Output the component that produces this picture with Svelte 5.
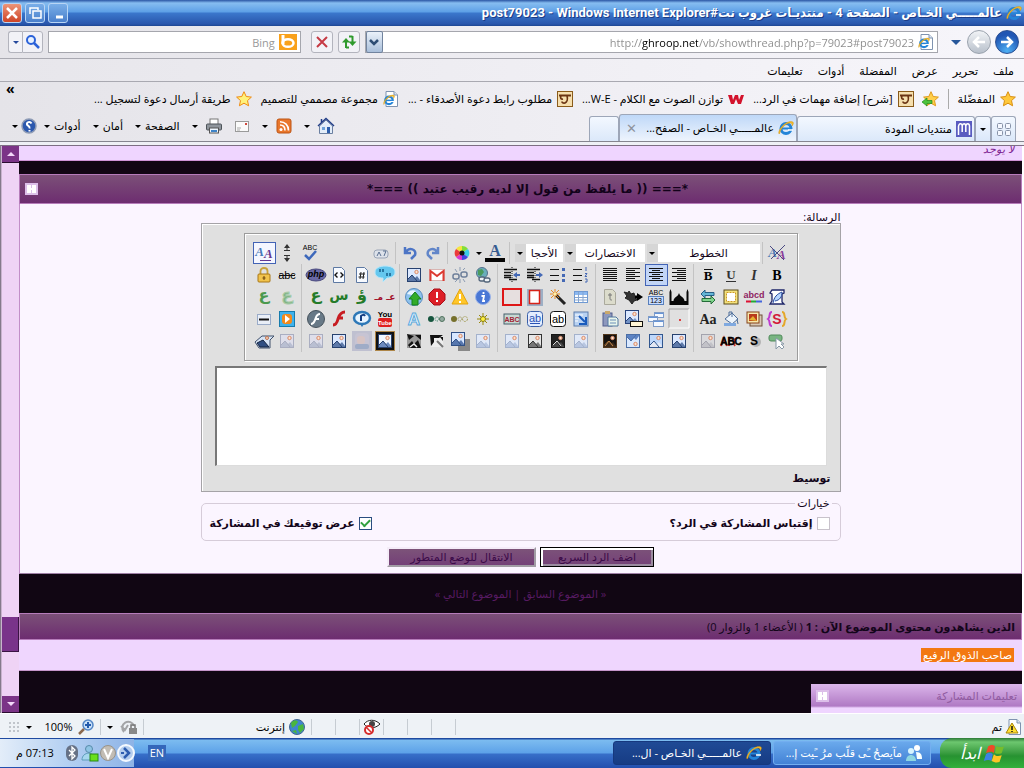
<script>
	let quote = $state(false);
	let signature = $state(true);
	let message = $state('');
	let url = $state('http://ghroop.net/vb/showthread.php?p=79023#post79023');
	let search = $state('');

	// small landscape thumbnail, most of the image effect buttons are variants of it
	function pic(sky, hill, edge, extra = '') {
		return `<rect x="1.5" y="1.5" width="13" height="13" fill="${sky}" stroke="${edge}"/><path d="M2 12l4-4 3 3 2-2 3 4v1H2z" fill="${hill}"/><path d="M2 12l4-4 5 6" fill="none" stroke="${edge}"/><circle cx="10.5" cy="5" r="1.7" fill="#fde3cc" stroke="#d98a6a"/>${extra}`;
	}

	// seven text lines, every second one short
	function lines(x, short) {
		return [2, 4, 6, 8, 10, 12, 14]
			.map((y, i) => `<path d="M${i % 2 ? x : 1} ${y - 0.5}h${i % 2 ? short : 14}" stroke="#111"/>`)
			.join('');
	}

	// centred icon lettering
	function letters(text, y, size, attrs = '') {
		return `<text x="8" y="${y}" text-anchor="middle" font-family="Liberation Sans, sans-serif" font-size="${size}" ${attrs}>${text}</text>`;
	}

	function serif(text, y, size, attrs = '') {
		return `<text x="8" y="${y}" text-anchor="middle" font-family="Liberation Serif, serif" font-weight="bold" font-size="${size}" ${attrs}>${text}</text>`;
	}

	function arabic(text, y, size, fill, attrs = '') {
		return `<text x="8" y="${y}" text-anchor="middle" font-family="DejaVu Sans, sans-serif" font-weight="bold" font-size="${size}" fill="${fill}" ${attrs}>${text}</text>`;
	}

	function star(fill, edge) {
		return `<path d="M8 .7l2.2 4.8 5.2.6-3.9 3.5 1.1 5.2L8 12.2l-4.6 2.6 1.1-5.2L.6 6.1l5.2-.6z" fill="${fill}" stroke="${edge}"/>`;
	}

	const ie =
		'<circle cx="8" cy="8.5" r="5" fill="none" stroke="#2384d8" stroke-width="3"/><path d="M4 8.5h9" stroke="#2384d8" stroke-width="2"/><path d="M10 10h5" stroke="#fff" stroke-width="1.5"/><path d="M1 14C-1 10 9-1 15 2c1 1 0 3-1 4 0-2 0-3-2-3C8 3 2 9 2 13z" fill="#f6bd2a" stroke="#c98a10" stroke-width=".4"/>';
	const page = '<path d="M3 .5h8l3.5 3.5v11.5H3z" fill="#fff" stroke="#7f93b0"/><path d="M11 .5V4h3.5" fill="#dbe5f3" stroke="#7f93b0"/>';
	const paper = '<path d="M2.5.5h8l3 3v12h-11z" fill="#f7faff" stroke="#5d79a3"/>';

	const icons = {
		ie,
		iePage: page + `<g transform="translate(0 3) scale(.75)">${ie}</g>`,
		star: star('#ffc83c', '#d98f12'),
		starHollow: star('#fff27a', '#f08b12'),
		starAdd: star('#ffcf4a', '#e09a1a') + '<path d="M-1 11l5-4v2.5h5v3H4V15z" fill="#4cc23c" stroke="#1e8a1c" stroke-width=".7"/>',
		fav: '<rect x=".5" y=".5" width="15" height="15" fill="#f6dfae" stroke="#8a5b1a"/><path d="M2 4.500h12" stroke="#6b3413" stroke-width="2"/><path d="M10 5c1 3 0 6-2 7-2 .5-3-.5-3-1.500M4 5c-1 2 0 3.500 2 3" fill="none" stroke="#6b3413" stroke-width="1.700"/>',
		w: '<path d="M0 4h4l1 5 2-5h3l1 5 2-5h3l-3 9h-3L8 8l-2 5H3z" fill="#d3122c"/>',
		m: '<rect width="16" height="16" fill="#5a5cc0"/><path d="M2.500 14V5.500C3 2 6 2 6.200 5v6M6.200 5c.5-3 3.300-3 3.600 0v6M9.800 5c.5-3 3.500-3 3.700 0v9" fill="none" stroke="#fff" stroke-width="1.500"/>',
		bing: '<rect width="18" height="16" fill="#f9a11b"/><path d="M4 1v9" stroke="#fff" stroke-width="3"/><ellipse cx="9" cy="9" rx="5.5" ry="3.8" fill="none" stroke="#fff" stroke-width="2.5"/>',
		search: '<circle cx="6" cy="6" r="4" fill="#e8f2ff" stroke="#2b62d9" stroke-width="2"/><path d="M9 9l5 5" stroke="#2b62d9" stroke-width="2.5"/>',
		stop: '<path d="M3 3l10 10M13 3L3 13" stroke="#c63a45" stroke-width="2"/>',
		refresh: '<path d="M5 14V7.500M8 13.500H5" stroke="#2f9a2d" stroke-width="2"/><path d="M1 8.500L5 4l4 4.500z" fill="#2f9a2d"/><path d="M11.500 2v6M8 2.500h3.500" stroke="#2f9a2d" stroke-width="2"/><path d="M7.500 7.500l4 4.500 4-4.500z" fill="#2f9a2d"/>',
		chevron: '<path d="M4 6l4 4 4-4" fill="none" stroke="#2e4d73" stroke-width="2.5"/>',
		quad: '<g fill="#f5f8ff" stroke="#8792a8"><rect x="1.5" y="2.5" width="5" height="5" rx="1"/><rect x="9.5" y="2.5" width="5" height="5" rx="1"/><rect x="1.5" y="9.5" width="5" height="5" rx="1"/><rect x="9.5" y="9.5" width="5" height="5" rx="1"/></g>',
		home: '<path d="M1.500 8L8 2l6.500 6v7.500h-13z" fill="#e3edf9" stroke="#6b7fa0"/><path d="M0 8l8-7.500L16 8M3.500 5V1" fill="none" stroke="#223e87" stroke-width="1.5"/><rect x="9" y="9" width="3" height="6" fill="#2c5dab"/><rect x="4" y="9" width="3" height="3" fill="#6fa2d9"/>',
		rss: '<rect x="1" y="1" width="14" height="14" rx="2" fill="#e9772c" stroke="#bd5514"/><circle cx="5" cy="11.5" r="1.5" fill="#fff"/><path d="M4 7c3 0 5 2 5 5.500M4 3.700c5 0 8.500 3.500 8.500 8.800" fill="none" stroke="#fff" stroke-width="1.6"/>',
		mail: '<rect x="1.5" y="3.5" width="13" height="10" fill="#fafafa" stroke="#9a9a9a"/><path d="M3 10h4M3 12h3" stroke="#aaa"/><rect x="11" y="5" width="2" height="2" fill="#d0463c"/>',
		print: '<rect x="4" y="1" width="8" height="6" fill="#fff" stroke="#777"/><rect x=".5" y="6" width="15" height="6" rx="1" fill="#8f959c" stroke="#4d5359"/><rect x="3.5" y="10" width="9" height="5" fill="#eef6ff" stroke="#555"/><path d="M5 13h6" stroke="#3e83c8" stroke-width="2"/>',
		help: '<circle cx="8" cy="8" r="7" fill="#2c58ae" stroke="#8e9bb5" stroke-width="1.5"/><path d="M10.500 5.500C9 3 5.500 4 6 6.500c1 2 3 1 2.500 4M8.500 12v1.500" fill="none" stroke="#fff" stroke-width="2"/>',
		bold: serif('B', 13, 14),
		italic: serif('I', 13, 14, 'font-style="italic" fill="#333"'),
		underline: serif('U', 12, 13, 'fill="#333"') + '<path d="M3 14.5h10" stroke="#333"/>',
		overline: serif('B', 13, 13) + '<path d="M4 2.5h9" stroke="#111"/>',
		alignRight: lines(6, 9),
		alignCenter: lines(4, 8),
		alignLeft: lines(1, 9),
		justify: lines(1, 14),
		ol: '<path d="M0 2.5h9M0 8.5h9M0 13.5h9" stroke="#111"/><path d="M13 0v4M12 6.5h2l-2 3h2M12 12h2v3h-2" fill="none" stroke="#4569b5"/>',
		ul: '<path d="M0 2.5h9M0 8.5h9M0 13.5h9" stroke="#111"/><g fill="#4569b5"><rect x="12" y="1" width="3" height="3"/><rect x="12" y="7" width="3" height="3"/><rect x="12" y="12" width="3" height="3"/></g>',
		indent: '<path d="M0 2.5h13M0 5.5h7M0 8.5h7M0 10.5h7M5 12.5h8" stroke="#111" stroke-width="1.5"/><path d="M8 0v16" stroke="#111" stroke-dasharray="1 1"/><path d="M9 8h3" stroke="#4569b5" stroke-width="2"/><path d="M12 5l4 3-4 3z" fill="#4569b5"/>',
		outdent: '<path d="M0 2.5h13M0 5.5h7M0 8.5h7M0 10.5h7M5 12.5h8" stroke="#111" stroke-width="1.5"/><path d="M8 0v16" stroke="#111" stroke-dasharray="1 1"/><path d="M13 8h3" stroke="#4569b5" stroke-width="2"/><path d="M13 5L9 8l4 3z" fill="#4569b5"/>',
		link: '<circle cx="7" cy="6" r="5.5" fill="#69aebb" stroke="#55708c"/><path d="M3 3l4-1 2 3-3 4-3-1z" fill="#4a9a5c"/><g fill="#eef2f5" stroke="#52647a" stroke-width="1.3"><rect x="4" y="10" width="6" height="4" rx="2"/><rect x="9" y="11" width="6" height="4" rx="2"/></g>',
		unlink: '<g fill="none" stroke="#6c7e99" stroke-width="1.5"><rect x="1" y="7" width="6" height="5" rx="2"/><rect x="9" y="5" width="6" height="5" rx="2"/></g><path d="M8 0v4M3 2l2 3M13 1l-2 2M8 12v4M3 15l2-2M13 15l-2-3" stroke="#8b9bb2"/>',
		gmail: '<rect x=".5" y="2.5" width="15" height="11" fill="#fff" stroke="#d9b5b2"/><path d="M1.500 14V4L8 9l6.500-5v10" fill="none" stroke="#dc3b32" stroke-width="2"/>',
		image: pic('#dce9ff', '#5d79a9', '#27416f'),
		quote: '<path d="M8-1c6 0 10 2 10 6s-4 6-8 6l-4 4v-4C1 11-2 9-2 5s5-6 10-6z" fill="#65c7ee" stroke="#bbe8fa"/><path d="M3 2v3M6 2v3M10 6v3M13 6v3" stroke="#155d8a" stroke-width="1.5"/>',
		code: paper + '<path d="M7 5L6 12M10 5l-1 7M5 7h6M4.500 10h6" stroke="#222"/>',
		html: paper + '<path d="M6.500 5.500L4 8l2.500 2.500M9.500 5.500L12 8l-2.500 2.500" fill="none" stroke="#111" stroke-width="1.4"/>',
		php: '<ellipse cx="8" cy="8" rx="10" ry="6" fill="#6a69a6" stroke="#46467c"/>' + letters('php', 10, 9, 'font-style="italic" font-weight="bold"'),
		strike: letters('abc', 12, 11) + '<path d="M0 8.5h16" stroke="#111"/>',
		lock: '<path d="M4.500 8V4c0-4 7-4 7 0v4" fill="none" stroke="#c8a23c" stroke-width="1.8"/><rect x="2" y="7" width="12" height="8" rx="1" fill="#f1c34c" stroke="#a87716"/><path d="M8 9v4M6.500 11h3" stroke="#6b430b"/>',
		scroll: '<path d="M3 1h12v3l-2 1v8l2 2H1l2-3V5L1 4z" fill="#fff" stroke="#1e2668" stroke-width="1.3"/><path d="M4 14C5 8 8 5 13 3c0 5-2 8-7 9" fill="#b7d6ff" stroke="#25479a"/>',
		abcd: letters('abcd', 9, 9, 'font-weight="bold" fill="#8e1d62"') + '<path d="M0 12.5h5" stroke="#d13" stroke-width="2"/><path d="M5 12.5h5" stroke="#2a3" stroke-width="2"/><path d="M10 12.5h6" stroke="#46d" stroke-width="2"/>',
		frame: '<rect x="1" y="1" width="14" height="14" fill="#f4e27b" stroke="#5b4b1b"/><rect x="3.5" y="3.5" width="9" height="9" fill="#fff" stroke="#c92" stroke-dasharray="2 1"/>',
		swap: '<path d="M1 5l4-4v2.500h9v3H5V9z" fill="#64b7d6" stroke="#275e86"/><path d="M15 11l-4-4v2.500H2v3h9V15z" fill="#81d58d" stroke="#246c39"/>',
		mosque: '<path d="M-1.500 16V3l1-3 1 3v9h2C2.500 8 7 8 8 4c1 4 5.500 4 5.500 8h2V3l1-3 1 3v13z" fill="#080808"/>',
		abc123: letters('ABC', 6, 7) + '<rect x=".5" y="7.5" width="15" height="8" fill="#c7dcff" stroke="#587fbb"/>' + letters('123', 14, 7),
		ink: '<path d="M-1 3l4 1 1-2 2 3 3-1 1 4 2 3-3 1-2 3-3-4-4-2 2-2z" fill="#333" stroke="#222"/><path d="M10 8h3" stroke="#000" stroke-width="3"/><path d="M12 4v8l6-4z" fill="#000"/>',
		note: '<path d="M2.500.5h8l3 3v12h-11z" fill="#dcdccc" stroke="#aaa99c"/><path d="M8 4v6c0 1 1 1 2 1M6 6h4" fill="none" stroke="#777"/>',
		table: '<rect x="1.5" y="2.5" width="13" height="11" fill="#fff" stroke="#6f99d2"/><rect x="2" y="3" width="12" height="3" fill="#8bb8f1"/><path d="M2 8.5h12M2 11h12M5.500 3v10M10 3v10" stroke="#85a5d0"/>',
		wand: '<path d="M6 6l9 9" stroke="#222" stroke-width="3"/><path d="M5 0v10M0 5h10M1 1l8 8M9 1L1 9" stroke="#e98a23"/><circle cx="5" cy="5" r="1.5" fill="#fff1a3"/>',
		paperRed: '<rect x="0" y="0" width="16" height="17" fill="#9dafc5"/><rect x="2.5" y="1.5" width="10" height="13" fill="#fff" stroke="#d82317" stroke-width="1.5"/>',
		redFrame: '<rect x="-1" y="0" width="18" height="16" fill="#e6dfdf" stroke="#de1717" stroke-width="2"/>',
		info: '<circle cx="8" cy="8" r="7.5" fill="#4977d5" stroke="#9ab3e9"/><path d="M8.500 3v2M6.500 7h2.500l-1 5h2" fill="none" stroke="#fff" stroke-width="1.8"/>',
		warn: '<path d="M8 0l8 15H0z" fill="#ffc629" stroke="#e3a30c"/><path d="M8 5v5M8 12v2" stroke="#fff" stroke-width="2"/>',
		halt: '<path d="M5 0h6l5 5v6l-5 5H5l-5-5V5z" fill="#dd1f27" stroke="#a70f19"/><path d="M8 3v6M8 11v2" stroke="#fff" stroke-width="2"/>',
		upload: '<circle cx="8" cy="8" r="8.5" fill="#8dc1ed" stroke="#5a8cc0"/><path d="M1 5c3-5 7-4 9-3L6 6z" fill="#e8f6ff"/><path d="M9 3l6 7h-3v6H6v-6H3z" fill="#32ac29" stroke="#14801c"/>',
		amRed: arabic('عـ مـ', 11, 9, '#a3122e'),
		waw: arabic('ؤ', 11, 16, '#247b29'),
		seen: arabic('س', 11, 14, '#247b29'),
		ain: arabic('ع', 11, 16, '#247b29'),
		ainGlow: arabic('ع', 11, 16, '#81b486', 'stroke="#a9cbaa"'),
		ainSoft: arabic('ع', 11, 16, '#4a994e'),
		smile: letters('S', 13, 14, 'font-weight="bold" fill="#d21b39"') + '<path d="M3 1C-1 1 2 6-1 8c3 2 0 7 4 7" fill="none" stroke="#bf3bd0" stroke-width="2"/><path d="M13 1c4 0 1 5 4 7-3 2 0 7-4 7" fill="none" stroke="#e4a72b" stroke-width="2"/>',
		photos: '<rect x="4" y="4" width="12" height="11" fill="#d8c8b5" stroke="#6f5039"/><rect x="1" y="1" width="12" height="11" fill="#f6e8ac" stroke="#86421a"/><rect x="3" y="3" width="8" height="7" fill="#b93a1c"/><path d="M3 9l4-4 4 5z" fill="#e4b32f"/>',
		bucket: '<path d="M2 8l7-6 6 6-6 5z" fill="#edf4fb" stroke="#4f6f9b"/><path d="M6 5V1h3v5M14 8l1 5" fill="none" stroke="#4f6f9b"/><path d="M1 12h12v3H1z" fill="#7fa9e0"/>',
		aa: serif('Aa', 13, 14, 'fill="#222"'),
		dot: '<path d="M-2 17V-2h20" fill="none" stroke="#a2a0a2"/><path d="M-2 17h20V-2" fill="none" stroke="#fff"/><rect x="8" y="8" width="2" height="2" fill="#dc4242"/>',
		windows: '<g fill="#f5f9ff" stroke="#7d9bc8"><rect x="6.5" y="1.5" width="9" height="5"/><rect x=".5" y="5.5" width="9" height="5"/><rect x="5.5" y="9.5" width="10" height="6"/></g><path d="M7 2.5h8M1 6.5h8M6 10.5h9" stroke="#6594d7"/>',
		caption: `<g transform="translate(-1 -2)">${pic('#dce9ff', '#7292c5', '#29447b')}</g><rect x="5.5" y="10.5" width="12" height="5" fill="#fff6d7" stroke="#111"/>`,
		paste: '<rect x="1" y="2" width="9" height="13" fill="#8d98bd" stroke="#535f8d"/><rect x="3" y="0" width="5" height="3" fill="#c9a86c"/><path d="M6 6h8l2 2v7H6z" fill="#e8f5ec" stroke="#5378a0"/><path d="M8 9h6M8 12h6" stroke="#6b8eb8"/>',
		imgDown: '<rect x="1" y="1" width="14" height="14" fill="#b9d2f2" stroke="#5d7dab"/><path d="M2 4h8M2 7h4M2 10h3" stroke="#fff"/><path d="M6 5l6 6M13 6v7H6" fill="none" stroke="#195bbd" stroke-width="2"/>',
		abBlack: '<rect x=".5" y=".5" width="15" height="15" rx="3" fill="#fff" stroke="#111"/>' + letters('ab', 12, 11),
		abBlue: '<rect x=".5" y=".5" width="15" height="15" rx="3" fill="#e3edff" stroke="#3a5fa8"/>' + letters('ab', 11, 11, 'fill="#2b53b5"') + '<path d="M3 12.5h10" stroke="#2b53b5"/>',
		abcRed: '<rect x="0" y="3" width="16" height="10" fill="#c7d7d2" stroke="#46606d"/>' + letters('ABC', 11, 7, 'font-weight="bold" fill="#a21f35"'),
		sun: '<path d="M8 2v12M2 8h12M4 4l8 8M12 4l-8 8" stroke="#998908"/><circle cx="8" cy="8" r="2.5" fill="#fff13b" stroke="#887c14"/>',
		dotsGold: '<circle cx="2" cy="8" r="3" fill="#76702c"/><circle cx="8" cy="8" r="2" fill="none" stroke="#8b843b" stroke-dasharray="1 1"/><circle cx="13" cy="8" r="2.5" fill="none" stroke="#a7a05b" stroke-dasharray="2 1"/>',
		dotsGreen: '<circle cx="2" cy="8" r="3" fill="#16553e"/><circle cx="8" cy="8" r="2" fill="none" stroke="#257b5a" stroke-dasharray="1 1"/><circle cx="13" cy="8" r="2.5" fill="#93aaa0" stroke="#51745f"/>',
		outlineA: letters('A', 14, 17, 'font-weight="bold" fill="#eef8ff" stroke="#5ba9dc"'),
		youtube: letters('You', 6, 8, 'font-weight="bold"') + '<rect x="1" y="7" width="14" height="9" rx="2" fill="#df2020"/>' + letters('Tube', 14, 6, 'font-weight="bold" fill="#fff"'),
		real: '<ellipse cx="8" cy="7" rx="8" ry="6" fill="#e7f4ff" stroke="#2d78b7" stroke-width="2.5"/><path d="M6 13l2 3 2-3" fill="#2d78b7"/><path d="M7 10V5c1-1 3-2 4 0" fill="none" stroke="#123c80" stroke-width="2"/>',
		flashRed: '<path d="M14 1C9 1 8 5 7 8c-1 4-2 6-5 6M7 7h5" fill="none" stroke="#c71c22" stroke-width="3"/>',
		flash: '<circle cx="8" cy="8" r="8.5" fill="#687987" stroke="#46525c"/><path d="M12 3C8 3 8 7 7 9s-1 4-4 4M7 8h4" fill="none" stroke="#fff" stroke-width="2"/>',
		play: '<rect x=".5" y=".5" width="15" height="15" fill="#3db2ee" stroke="#167bac"/><rect x="3" y="3" width="10" height="10" rx="3" fill="#f38a1c"/><path d="M6 4l5 4-5 4z" fill="#fff"/>',
		hr: '<rect x="1.5" y="3.5" width="13" height="10" fill="#e9eef7" stroke="#9aabc8"/><path d="M3 8.5h10" stroke="#111" stroke-width="2"/>',
		pick: '<rect x="0" y="2" width="13" height="6" rx="2" fill="#79b582" stroke="#508b5b"/><path d="M7 5v11l3-3 3 3 2-2-3-3h3z" fill="#fff" stroke="#8798a7"/>',
		shadowS: '<circle cx="10" cy="9" r="5" fill="#b4b4b4"/>' + letters('S', 12, 12, 'font-weight="bold"'),
		abcShadow: '<path d="M-2 13l3-8 3 8M6 13V5h3M12 13c-2-3-1-7 2-8" fill="none" stroke="#d2352e" stroke-width="2"/>' + letters('ABC', 12, 10, 'font-weight="bold" stroke="#000" stroke-width=".4"'),
		picGrey: pic('#d9d9dc', '#c2c2c8', '#a3a3ad'),
		picA: pic('#bfd8fb', '#e3e8f3', '#32578f'),
		picFlip: `<g transform="matrix(1 0 0 -1 0 16)">${pic('#dae9ff', '#5c83c4', '#4c6fa6')}</g>`,
		picDark: pic('#15120f', '#3b2918', '#51361b', '<path d="M3 13l4-5 4 5" fill="none" stroke="#c98b4e"/>'),
		picLight: pic('#e1e9f8', '#b8c6e1', '#a4b2cc'),
		picBlack: pic('#222', '#444', '#151515', '<path d="M3 12l4-4 4 5" fill="none" stroke="#ddd"/>'),
		picBw: pic('#e7e7e7', '#777', '#333'),
		picShadow: `<rect x="6" y="6" width="12" height="12" fill="#888"/><g transform="translate(-2 -2)">${pic('#d7e7ff', '#5777ae', '#315186')}</g>`,
		picSketch: '<path d="M2 2h12v12H2z" fill="#eee"/><path d="M1 2h13l-4 3H5v4l-3 4zM6 9l4 5M11 4h3v4z" fill="#111"/><path d="M8 8l6 6" stroke="#777" stroke-width="2"/>',
		picSketch2: '<path d="M1 1h14v14H1z" fill="#999"/><path d="M1 1l7 2-5 4zM9 2h6v5zM2 12l4-4 2 3 4-4 3 8H4z" fill="#111"/><path d="M4 14l4-3 3 3" stroke="#eee" fill="none" stroke-width="1.5"/>',
		picGold: `<rect x="-2" y="-2" width="20" height="20" fill="#ae8648"/><rect x="-1" y="-1" width="18" height="18" fill="#111"/>${pic('#f0f6ff', '#6c8bc0', '#27416f')}`,
		picBlur: '<rect x="-2" y="-2" width="20" height="20" fill="#bfc0d0"/><rect x="1" y="0" width="14" height="14" rx="4" fill="#c7c4d3"/><rect x="3" y="3" width="8" height="8" rx="3" fill="#d7c4c4"/><rect x="1" y="11" width="14" height="5" rx="2" fill="#9facc7"/>',
		picFade: pic('#dedeea', '#b9bfd2', '#aaaec1'),
		pic3d: '<path d="M-1 9L6 3h12l-4 4v8H3z" fill="#d7e4f5" stroke="#40506b"/><path d="M1 10l6-3 6 7H4z" fill="#314f82" stroke="#152441"/><circle cx="11" cy="5" r="1.5" fill="#fbd5b8" stroke="#bf7452"/>',
		noFormat: serif('<tspan fill="#4d7ab4">A</tspan><tspan dy="2" fill="#8a3d9a">A</tspan>', 12, 13, 'font-style="italic"') + '<path d="M1 1l14 14M16 0L2 14" stroke="#4b4b83"/>',
		format: serif('<tspan fill="#4677b7">A</tspan><tspan dy="2" fill="#643891">A</tspan>', 11, 13, 'font-style="italic"') + '<path d="M4 15.5h11" stroke="#643891"/>',
		fontColor: serif('A', 11, 16, 'fill="#365b91"') + '<rect x="-2" y="13" width="20" height="4" fill="#050505"/>',
		wheel: '<g opacity=".9"><path d="M8 8L2 4a7 7 0 0 1 6-3z" fill="#f8e52e"/><path d="M8 8V1a7 7 0 0 1 6 3z" fill="#79df29"/><path d="M8 8l6-4a7 7 0 0 1 0 8z" fill="#28cbe8"/><path d="M8 8l6 4a7 7 0 0 1-6 3z" fill="#3136e4"/><path d="M8 8v7a7 7 0 0 1-6-3z" fill="#da29cf"/><path d="M8 8l-6 4a7 7 0 0 1 0-8z" fill="#ed2929"/></g><circle cx="8" cy="8" r="2.5" fill="#111"/>',
		undo: '<path d="M3 2v6h6M4 7c3-5 11-3 9 3l-4 4" fill="none" stroke="#4d75c5" stroke-width="2.5"/>',
		redo: '<path d="M13 2v6H7M12 7C9 2 1 4 3 10l4 4" fill="none" stroke="#6286c9" stroke-width="2.5"/>',
		swapText: '<rect x="1" y="5" width="14" height="8" rx="3" fill="#dde2ea" stroke="#9aa5b7"/><path d="M4 11l2-4 2 4M10 6h3l-2 5" fill="none" stroke="#586e8f"/>',
		spell: letters('ABC', 5, 7) + '<path d="M3 10l4 4 7-8" fill="none" stroke="#3d68bb" stroke-width="2.5"/>',
		resize: '<path d="M8 0v5M8 11v5" stroke="#333"/><path d="M5 3l3-4 3 4zM5 13l3 4 3-4z" fill="#333"/><path d="M5 5.5h6M5 10.5h6" stroke="#333"/>',
		collapse: '<rect x="1" y="2" width="13" height="12" fill="#dcbfe9"/><path d="M3 4h4v3h1V4h4v8H8V9H7v3H3z" fill="#fff"/>',
		alert: page + '<path d="M6 4l6 10H0z" fill="#ffde31" stroke="#aa8709"/><path d="M6 7v4M6 12v1" stroke="#111" stroke-width="1.5"/>',
		globe: '<circle cx="8" cy="8" r="7.5" fill="#3f85ce" stroke="#416793"/><path d="M2 4c3-4 6-3 7-1L6 7 3 9zM9 7l5-2 1 5-4 4-2-3zM3 12l4-1 1 4z" fill="#49b63f"/>',
		eye: '<path d="M0 5c4-5 11-5 16 0-5 5-12 5-16 0z" fill="#fff" stroke="#222"/><circle cx="8" cy="5" r="3" fill="#444"/><circle cx="5" cy="11" r="4" fill="#fff" stroke="#d52c2c" stroke-width="2"/><path d="M2 8l6 6" stroke="#d52c2c" stroke-width="1.5"/>',
		zoomIn: '<circle cx="10" cy="6" r="5" fill="#c9e0f8" stroke="#5487c6" stroke-width="1.5"/><path d="M10 3v6M7 6h6" stroke="#235bad" stroke-width="2"/><path d="M6 10l-5 5" stroke="#8a684e" stroke-width="2.5"/>',
		protect: '<path d="M13 7A6 6 0 1 0 3 13M0 7l4 4 3-5" fill="none" stroke="#a4a5a7" stroke-width="2"/><rect x="8" y="9" width="8" height="6" fill="#888"/><path d="M10 9V6h4v3" fill="none" stroke="#777" stroke-width="1.5"/>',
		flag: '<path d="M2 2c3-2 5-1 6 0L7 8C5 6 3 7 0 8z" fill="#ef4a27"/><path d="M9 2c3 1 5 1 7 0l-2 6c-2 1-4 1-6 0z" fill="#77bd2b"/><path d="M0 9c3-2 5-1 6 0l-1 6c-2-1-4-1-7 0z" fill="#3c83e4"/><path d="M7 9c2 2 4 2 7 1l-2 6c-3 1-5 0-7-1z" fill="#fec525"/>',
		people: '<circle cx="5" cy="6" r="3" fill="#d7f4ff"/><circle cx="11" cy="3" r="3" fill="#fff"/><path d="M0 16c0-8 10-8 10 0z" fill="#8ed6e1"/><path d="M10 7c5 0 6 3 6 7h-5" fill="#f7ffff"/>',
		bluetooth: '<rect x="2" y="0" width="12" height="16" rx="6" fill="#667185"/><path d="M5 5l6 6-3 3V2l3 3-6 6" fill="none" stroke="#fff" stroke-width="1.3"/>',
		buddy: '<circle cx="7" cy="4" r="3.5" fill="#8fc4e4" stroke="#578aa9"/><path d="M0 15c0-9 13-9 13 0z" fill="#a6d7ee" stroke="#5f9dba"/><rect x="8" y="9" width="8" height="7" fill="#69df1d" stroke="#298819"/>',
		shield: '<circle cx="8" cy="8" r="7.5" fill="#c2bdb5" stroke="#989289"/><path d="M4 4l4 9 4-9" fill="none" stroke="#fff" stroke-width="2"/>',
		expand: '<circle cx="8" cy="8" r="8" fill="#b4cdee" stroke="#f4f9ff" stroke-width="2"/><path d="M3 8h3" stroke="#2d5db0" stroke-width="2"/><path d="M6 3l5 5-5 5" fill="none" stroke="#2d5db0" stroke-width="2.5"/>'
	};

	const menus = ['ملف', 'تحرير', 'عرض', 'المفضلة', 'أدوات', 'تعليمات'];

	const favorites = [
		{ icon: 'fav', text: '[شرح] إضافة مهمات في الرد...' },
		{ icon: 'w', text: 'توازن الصوت مع الكلام - W-E...' },
		{ icon: 'fav', text: 'مطلوب رابط دعوة الأصدقاء - ...' },
		{ icon: 'iePage', text: 'مجموعة مصممي للتصميم' },
		{ icon: 'starHollow', text: 'طريقة أرسال دعوة لتسجيل ...' }
	];

	const commands = [
		{ icon: 'home', label: 'الصفحة الرئيسية', arrow: true },
		{ icon: 'rss', label: 'موجزات', arrow: true },
		{ icon: 'mail', label: 'البريد' },
		{ icon: 'print', label: 'طباعة', arrow: true },
		{ text: 'الصفحة', arrow: true },
		{ text: 'أمان', arrow: true },
		{ text: 'أدوات', arrow: true },
		{ icon: 'help', label: 'تعليمات', arrow: true }
	];

	const selects = [
		{ label: 'الخطوط', size: 'wide' },
		{ label: 'الاختصارات', size: 'medium' },
		{ label: 'الأحجا', size: 'small' }
	];

	// one entry per toolbar row, groups are split by a divider
	const tools = [
		[['bold', 'italic', 'underline', 'overline'], ['alignRight', 'alignCenter', 'alignLeft', 'justify'], ['ol', 'ul', 'indent', 'outdent'], ['link', 'unlink', 'gmail', 'image'], ['quote', 'code', 'html', 'php'], ['strike', 'lock']],
		[['scroll', 'abcd', 'frame', 'swap'], ['mosque', 'abc123', 'ink', 'note'], ['table', 'wand', 'paperRed', 'redFrame'], ['info', 'warn', 'halt', 'upload'], ['amRed', 'waw', 'seen', 'ain'], ['ainGlow', 'ainSoft']],
		[['smile', 'photos', 'bucket', 'aa'], ['dot', 'windows', 'caption', 'paste'], ['imgDown', 'abBlack', 'abBlue', 'abcRed'], ['sun', 'dotsGold', 'dotsGreen', 'outlineA'], ['youtube', 'real', 'flashRed', 'flash'], ['play', 'hr']],
		[['pick', 'shadowS', 'abcShadow', 'picGrey'], ['image', 'picA', 'picFlip', 'picDark'], ['picLight', 'picBlack', 'picBw', 'picLight'], ['picLight', 'picShadow', 'picSketch', 'picSketch2'], ['picGold', 'picBlur', 'image', 'picFade'], ['picFade', 'pic3d']]
	];
</script>

{#snippet icon(name)}
	<svg class="icon" viewBox="0 0 16 16" aria-hidden="true">{@html icons[name]}</svg>
{/snippet}

{#snippet tool(name)}
	<button type="button" class="tool" class:active={name === 'alignCenter' || name === 'format'} aria-label={name}>
		{@render icon(name)}
	</button>
{/snippet}

<div class="window" dir="rtl">
	<header class="title">
		{@render icon('ie')}
		<span class="caption">عالمـــــي الخـاص - الصفحة 4 - منتديـات غروب نت#post79023 - Windows Internet Explorer</span>
		<div class="controls">
			<button aria-label="تصغير"><svg class="icon" viewBox="0 0 16 16"><path d="M6 12h7" stroke="#fff" stroke-width="3" /></svg></button>
			<button aria-label="استعادة"><svg class="icon" viewBox="0 0 16 16"><path d="M3 9V3h8v2M6 6h8v7H6z" fill="none" stroke="#fff" stroke-width="1.5" /></svg></button>
			<button class="close" aria-label="إغلاق"><svg class="icon" viewBox="0 0 16 16"><path d="M3 3l10 10M13 3L3 13" stroke="#fff" stroke-width="2.5" /></svg></button>
		</div>
	</header>

	<div class="address">
		<div class="nav">
			<button class="round blue" aria-label="رجوع"><svg class="icon" viewBox="0 0 16 16"><path d="M2 8h11M8 3l5 5-5 5" fill="none" stroke="#fff" stroke-width="2.5" /></svg></button>
			<button class="round" aria-label="إلى الأمام"><svg class="icon" viewBox="0 0 16 16"><path d="M14 8H3M8 3L3 8l5 5" fill="none" stroke="#fff" stroke-width="2.5" /></svg></button>
			<button class="plain" aria-label="الصفحات الأخيرة"><i class="down big"></i></button>
		</div>
		<div class="field">
			{@render icon('iePage')}
			<input class="url" dir="ltr" aria-label="العنوان" bind:value={url} />
			<button class="drop" aria-label="العناوين المكتوبة">{@render icon('chevron')}</button>
		</div>
		<button class="square" aria-label="تحديث">{@render icon('refresh')}</button>
		<button class="square" aria-label="إيقاف">{@render icon('stop')}</button>
		<div class="field search">
			<svg class="bing" viewBox="0 0 18 16">{@html icons.bing}</svg>
			<input aria-label="بحث" placeholder="Bing" bind:value={search} />
		</div>
		<div class="go">
			<button aria-label="بحث">{@render icon('search')}</button>
			<button class="narrow" aria-label="خيارات البحث"><i class="down blue-arrow"></i></button>
		</div>
	</div>

	<nav class="menu">
		{#each menus as item}
			<button class="plain">{item}</button>
		{/each}
	</nav>

	<div class="favorites">
		<button class="plain entry">{@render icon('star')}المفضّلة</button>
		<span class="bar"></span>
		<button class="plain add" aria-label="إضافة إلى المفضلة">{@render icon('starAdd')}</button>
		{#each favorites as fav}
			<a class="entry" href="#fav">{@render icon(fav.icon)}{fav.text}</a>
		{/each}
		<span class="more">»</span>
	</div>

	<div class="tabs">
		<button class="tab quick" aria-label="علامات التبويب السريعة">{@render icon('quad')}</button>
		<button class="tab list" aria-label="قائمة علامات التبويب"><i class="down"></i></button>
		<button class="tab">{@render icon('m')}<span>منتديات المودة</span></button>
		<button class="tab current">{@render icon('ie')}<span>عالمـــــي الخـاص - الصفح...</span><b>✕</b></button>
		<button class="tab fresh" aria-label="علامة تبويب جديدة"></button>
		<div class="commands">
			{#each commands as cmd}
				<button class="plain" class:worded={cmd.text} aria-label={cmd.label}>
					{#if cmd.icon}{@render icon(cmd.icon)}{:else}{cmd.text}{/if}
					{#if cmd.arrow}<i class="down"></i>{/if}
				</button>
			{/each}
		</div>
	</div>

	<div class="view">
		<main>
			<div class="previous"><em>لا يوجد</em></div>
			<div class="gap"></div>
			<div class="head reply">
				<h2>*=== (( ما يلفظ من قول إلا لديه رقيب عتيد )) ===*</h2>
				<button class="plain" aria-label="طي">{@render icon('collapse')}</button>
			</div>
			<form class="panel" onsubmit={(e) => e.preventDefault()}>
				<div class="form">
					<label class="message" for="message">الرسالة:</label>
					<div class="editor">
						<div class="toolbar">
							<div class="tools first">
								{@render tool('noFormat')}
								<span class="divider"></span>
								{#each selects as s}
									<label class="select {s.size}">
										<select aria-label={s.label}><option>{s.label}</option></select>
										<i class="down"></i>
									</label>
								{/each}
								<span class="divider"></span>
								{@render tool('fontColor')}
								<i class="down pick"></i>
								{@render tool('wheel')}
								<span class="divider"></span>
								{@render tool('redo')}
								{@render tool('undo')}
								<span class="divider"></span>
								{@render tool('swapText')}
								<span class="space"></span>
								{@render tool('spell')}
								{@render tool('resize')}
								{@render tool('format')}
							</div>
							{#each tools as row}
								<div class="tools">
									{#each row as group, i}
										{#if i}<span class="divider"></span>{/if}
										{#each group as name}
											{@render tool(name)}
										{/each}
									{/each}
								</div>
							{/each}
						</div>
						<textarea id="message" bind:value={message}></textarea>
						<strong>توسيط</strong>
					</div>
					<fieldset>
						<legend>خيارات</legend>
						<label><input type="checkbox" bind:checked={quote} />إقتباس المشاركة في الرد؟</label>
						<label><input type="checkbox" bind:checked={signature} />عرض توقيعك في المشاركة</label>
					</fieldset>
					<div class="actions">
						<button class="submit main">اضف الرد السريع</button>
						<button class="submit" type="button">الانتقال للوضع المتطور</button>
					</div>
				</div>
			</form>
			<div class="pager">« <a href="#prev">الموضوع السابق</a> | <a href="#next">الموضوع التالي</a> »</div>
			<div class="head viewers"><p><b>الذين يشاهدون محتوى الموضوع الآن : 1</b> ( الأعضاء 1 والزوار 0)</p></div>
			<div class="members"><a href="#member">صاحب الذوق الرفيع</a></div>
			<div class="gap"></div>
			<div class="rules">
				<span>تعليمات المشاركة</span>
				<button class="plain" aria-label="طي">{@render icon('collapse')}</button>
			</div>
		</main>
		<div class="scroll">
			<button aria-label="أعلى"><i class="up"></i></button>
			<div class="track"><span class="before"></span><span class="thumb"></span><span class="after"></span></div>
			<button aria-label="أسفل"><i class="down light"></i></button>
		</div>
	</div>

	<footer class="status">
		{@render icon('alert')}
		<span>تم</span>
		<div class="cells">
			<span class="cell"></span>
			<span class="cell"></span>
			<span class="cell"></span>
			<span class="cell">{@render icon('eye')}</span>
			<span class="cell"></span>
			<span class="cell"></span>
			<span class="cell zone">{@render icon('globe')}إنترنت</span>
			<span class="cell guard">{@render icon('protect')}<i class="down"></i></span>
			<span class="cell zoom">{@render icon('zoomIn')}<span>100%</span><i class="down"></i></span>
			<span class="grip"></span>
		</div>
	</footer>

	<div class="taskbar">
		<button class="start">{@render icon('flag')}<span>ابدأ</span></button>
		<button class="task">{@render icon('people')}<span>مآيصحُ ـًى قلّب مرُ ـًيت إ...</span></button>
		<button class="task pressed">{@render icon('ie')}<span>عالمـــــي الخـاص - ال...</span></button>
		<span class="lang">EN</span>
		<div class="tray">
			{@render icon('expand')}
			{@render icon('shield')}
			{@render icon('buddy')}
			{@render icon('bluetooth')}
			<time>07:13 م</time>
		</div>
	</div>
</div>

<style>
	:global(body) {
		margin: 0;
	}
	.window {
		height: 100vh;
		min-width: 1000px;
		display: flex;
		flex-direction: column;
		overflow: hidden;
		background: #eef0f5;
		font-family: 'Open Sans', 'DejaVu Sans', sans-serif;
		font-size: 11px;
		line-height: 16px;
		color: #000;
	}
	.window * {
		box-sizing: border-box;
	}
	button,
	input,
	select,
	textarea {
		font: inherit;
		color: inherit;
		margin: 0;
	}
	button {
		padding: 0;
		display: flex;
		align-items: center;
		justify-content: center;
		white-space: nowrap;
	}
	.plain {
		border: 0;
		background: none;
	}
	a {
		color: inherit;
		text-decoration: none;
	}
	.icon {
		width: 16px;
		height: 16px;
		flex: none;
		overflow: visible;
	}
	.down,
	.up {
		flex: none;
		border: 3px solid transparent;
		border-top-color: #000;
		border-bottom: 0;
	}
	.up {
		border: 4px solid transparent;
		border-bottom-color: #f3d9fa;
		border-top: 0;
	}
	.down.light {
		border-width: 4px 4px 0;
		border-top-color: #f3d9fa;
	}
	.down.big {
		border-width: 5px 5px 0;
		border-top-color: #27579a;
	}
	.blue-arrow {
		border-top-color: #24489c;
	}

	/* title bar */
	.title {
		height: 26px;
		flex: none;
		display: flex;
		align-items: center;
		gap: 4px;
		padding: 0 2px;
		background: linear-gradient(#2a55a4, #86bdf0 3px, #5d9fe6 12px, #3b77cc 13px, #2956ac 24px, #1d4692);
	}
	.caption {
		flex: 1;
		color: #fff;
		font-family: Roboto, 'DejaVu Sans Condensed', 'DejaVu Sans', sans-serif;
		font-size: 13px;
		font-weight: bold;
		white-space: nowrap;
		text-shadow: 1px 1px 0 #1c3c86;
	}
	.controls {
		display: flex;
		gap: 3px;
	}
	.controls button {
		width: 20px;
		height: 20px;
		border: 1px solid #b8d5f5;
		border-radius: 3px;
		background: linear-gradient(#79aee8, #4a80cc);
	}
	.controls .close {
		background: linear-gradient(#ec9578, #ce4426);
	}

	/* address row */
	.address {
		height: 33px;
		flex: none;
		display: flex;
		align-items: center;
		gap: 5px;
		padding: 2px 5px 2px 8px;
		background: linear-gradient(90deg, #e5e4e9, #f7f6fb);
		border-bottom: 1px solid #a9a9b1;
	}
	.nav {
		display: flex;
		align-items: center;
		gap: 4px;
		margin-left: 8px;
	}
	.round {
		width: 24px;
		height: 24px;
		border: 1px solid #9aa2ad;
		border-radius: 12px;
		background: linear-gradient(#f1f3f6, #b8c0cb);
	}
	.round.blue {
		border-color: #2c4f92;
		background: radial-gradient(circle at 50% 90%, #4fb0f4, #2156b4 70%);
	}
	.nav .plain {
		margin-right: 2px;
	}
	.field {
		height: 22px;
		flex: 1;
		display: flex;
		align-items: center;
		gap: 4px;
		padding-right: 3px;
		background: #fff;
		border: 1px solid #a5a6ad;
	}
	.field input {
		flex: 1;
		min-width: 0;
		height: 20px;
		border: 0;
		padding: 0;
		outline: 0;
		background: none;
		text-align: right;
	}
	/* the host name stands out from the rest of the address */
	.field .url {
		background: linear-gradient(to left, #8b8b8b 216px, #000 216px, #000 272px, #8b8b8b 272px);
		background-clip: text;
		-webkit-background-clip: text;
		color: transparent;
	}
	.drop {
		width: 17px;
		height: 22px;
		border: 1px solid #71839e;
		border-radius: 2px;
		background: linear-gradient(#eaf1fa, #a9bfda);
	}
	.square {
		width: 22px;
		height: 22px;
		border: 1px solid #b3b4bd;
		border-radius: 3px;
		background: #f2f2f7;
	}
	.search {
		flex: none;
		width: 25%;
		margin-right: 5px;
	}
	.search input::placeholder {
		color: #999;
		opacity: 1;
	}
	.bing {
		width: 18px;
		height: 16px;
	}
	.go {
		display: flex;
	}
	.go button {
		width: 21px;
		height: 22px;
		border: 1px solid #b3b4bd;
		border-radius: 0 3px 3px 0;
		background: #f2f2f7;
	}
	.go .narrow {
		width: 14px;
		border-right: 0;
		border-radius: 3px 0 0 3px;
	}

	/* menus and favourites */
	.menu {
		height: 23px;
		flex: none;
		display: flex;
		align-items: center;
		gap: 15px;
		padding: 2px 10px 0;
		background: linear-gradient(90deg, #e7e6eb, #f7f6fb);
		border-bottom: 1px solid #a9a9b1;
	}
	.favorites {
		height: 33px;
		flex: none;
		display: flex;
		align-items: center;
		gap: 9px;
		padding: 0 8px 0 6px;
		white-space: nowrap;
		background: linear-gradient(90deg, #e5e4e9, #f7f6fb);
	}
	.entry {
		display: flex;
		align-items: center;
		gap: 5px;
	}
	.bar {
		width: 1px;
		height: 20px;
		background: #aaa;
	}
	.more {
		margin-right: auto;
		align-self: flex-start;
		font-size: 14px;
		font-weight: bold;
		line-height: 14px;
	}
	.tabs {
		height: 27px;
		flex: none;
		display: flex;
		align-items: flex-end;
		padding: 0 8px 0 12px;
		background: linear-gradient(90deg, #e5e4e9, #f7f6fb);
		border-bottom: 1px solid #85858f;
	}
	.tab {
		width: 178px;
		height: 25px;
		gap: 4px;
		padding: 0 2px 0 6px;
		justify-content: flex-start;
		border: 1px solid #9da6b8;
		border-bottom: 0;
		border-radius: 3px 3px 0 0;
		background: linear-gradient(#f3f8ff, #dbe8fa);
	}
	.tab.quick {
		width: 25px;
		padding: 0 3px;
	}
	.tab.list {
		width: 16px;
		padding: 0 4px;
	}
	.tab.current {
		height: 27px;
		background: linear-gradient(#bfd8f8, #eef4fd);
	}
	.tab.fresh {
		width: 30px;
	}
	.tab b {
		margin-right: auto;
		color: #8e939d;
		font-size: 13px;
	}
	.commands {
		display: flex;
		align-items: center;
		gap: 12px;
		height: 26px;
		margin-right: auto;
		padding-bottom: 4px;
	}
	.commands button {
		height: 20px;
		gap: 8px;
	}
	.commands .worded {
		gap: 4px;
	}
	.commands button:last-child {
		gap: 3px;
		margin-right: -5px;
	}

	/* page */
	.view {
		flex: 1;
		min-height: 0;
		display: flex;
		overflow: hidden;
		margin-top: 3px;
		border-top: 1px solid #7d6e83;
		border-left: 1px solid #857a8b;
		padding-right: 2px;
		background: #fff;
	}
	main {
		flex: 1;
		min-width: 0;
		overflow: hidden;
		background: #110613;
		color: #13051a;
	}
	.previous {
		height: 15px;
		overflow: hidden;
		padding: 0 8px;
		line-height: 6px;
		color: #7d2491;
		background: #efd5ff;
		border-bottom: 1px solid #cf94d6;
	}
	.gap {
		height: 13px;
	}
	.head {
		display: flex;
		align-items: center;
		border: 1px solid #b67cba;
		background: linear-gradient(#7b5078, #6d2d70);
		padding: 0 6px 0 4px;
	}
	.reply {
		height: 30px;
	}
	.head h2 {
		flex: 1;
		margin: 0;
		text-align: center;
		font-family: 'DejaVu Sans', sans-serif;
		font-size: 12px;
		color: #12021a;
	}
	.panel {
		border: 1px solid #c28ec8;
		border-top: 0;
		border-bottom-color: #9e7fa5;
		background: #fbf5ff;
		padding: 7px 0 6px;
	}
	.form {
		width: 63%;
		min-width: 640px;
		margin: 0 auto;
	}
	.message {
		display: block;
		line-height: 12px;
	}
	.editor {
		display: flex;
		flex-direction: column;
		align-items: center;
		padding: 9px 9px 5px;
		border: 1px solid #a5a3a7;
		background: #e0e0e0;
		box-shadow: inset 1px 1px 0 #fff;
	}
	.toolbar {
		padding: 8px;
		border: 1px solid #9c9c9c;
		box-shadow: inset 1px 1px 0 #fff, 1px 1px 0 #fff;
	}
	.tools {
		display: flex;
		align-items: center;
		height: 22px;
	}
	.tool {
		width: 23px;
		height: 22px;
		flex: none;
		border: 0;
		background: none;
	}
	.tool.active {
		border: 1px solid #4263b5;
		background: #c2d5f6;
	}
	.first .tool.active {
		background: #f4f6ff;
	}
	.divider {
		width: 1px;
		height: 22px;
		margin: 0 3px 0 2px;
		background: #c3c3c3;
	}
	.select {
		display: flex;
		align-items: center;
		height: 18px;
		margin-left: 2px;
	}
	.select select {
		flex: 1;
		min-width: 0;
		height: 18px;
		appearance: none;
		border: 0;
		border-radius: 0;
		padding: 0;
		background: #fff;
		text-align: center;
	}
	.select .down {
		border: 0;
		width: 11px;
		height: 18px;
		display: flex;
		align-items: center;
		justify-content: center;
		background: #d6d6d6;
	}
	.select .down::after {
		content: '';
		border: 3px solid transparent;
		border-top-color: #000;
		border-bottom: 0;
	}
	.wide {
		width: 113px;
	}
	.medium {
		width: 80px;
	}
	.small {
		width: 48px;
	}
	.pick {
		margin: 0 2px;
	}
	.space {
		flex: 1;
	}
	textarea {
		width: calc(100% - 8px);
		height: 100px;
		margin: 5px 0 4px;
		resize: none;
		border: 1px solid #dcdcdc;
		border-top: 2px solid #777;
		border-left: 2px solid #777;
		background: #fff;
		outline: 0;
	}
	.editor strong {
		align-self: stretch;
	}
	fieldset {
		display: flex;
		justify-content: space-between;
		margin: 3px 0 0;
		padding: 4px 8px 9px;
		border: 1px solid #d6ccd9;
		border-radius: 5px;
	}
	legend {
		padding: 0 2px;
	}
	fieldset label {
		display: flex;
		align-items: center;
		gap: 2px;
		font-weight: bold;
	}
	fieldset input {
		appearance: none;
		display: grid;
		place-items: center;
		width: 13px;
		height: 13px;
		margin: 0 2px;
		border: 1px solid #c8c2cb;
		background: #fff;
	}
	fieldset input:checked {
		border-color: #2a4d80;
	}
	fieldset input:checked::after {
		content: '';
		width: 7px;
		height: 4px;
		margin-bottom: 2px;
		border: solid #32a13e;
		border-width: 0 0 2px 2px;
		transform: rotate(-45deg);
	}
	.actions {
		display: flex;
		justify-content: center;
		gap: 4px;
		margin-top: 6px;
	}
	.submit {
		width: 149px;
		height: 20px;
		border: 2px outset #f4ecf8;
		background: linear-gradient(#7c5379, #744078);
		color: #3b0a48;
	}
	.submit.main {
		width: 114px;
		border: 1px solid #000;
		box-shadow: inset 1px 1px 0 1px #fff, inset -1px -1px 0 1px #9b8ba0;
	}
	.pager {
		padding: 12px 0 11px;
		text-align: center;
		color: #571b62;
	}
	.viewers {
		height: 27px;
	}
	.viewers p {
		margin: 0;
	}
	.members {
		height: 31px;
		padding: 7px 8px;
		background: #efd6fe;
		border-bottom: 1px solid #c595ca;
	}
	.members a {
		display: inline-block;
		padding: 0 2px;
		line-height: 14px;
		background: #f37812;
		color: #fff;
	}
	.rules {
		display: flex;
		align-items: center;
		justify-content: space-between;
		width: 21%;
		height: 29px;
		padding: 0 5px 5px 4px;
		color: #8f5aa0;
		background: linear-gradient(#dcb6eb, #b07ac4 22px, #efd5ff 24px);
	}
	.scroll {
		width: 18px;
		flex: none;
		display: flex;
		flex-direction: column;
		background: #efd3f5;
		border-left: 1px solid #c9b3ce;
	}
	.scroll button {
		height: 17px;
		border: 0;
		border-bottom: 1px solid #2b0d31;
		background: #7b3487;
	}
	.track {
		flex: 1;
		display: flex;
		flex-direction: column;
	}
	.before {
		flex: 456;
	}
	.thumb {
		height: 35px;
		background: #79338a;
		border: solid #3a1443;
		border-width: 0 1px 1px 0;
	}
	.after {
		flex: 44;
	}

	/* status bar and taskbar */
	.status {
		height: 25px;
		flex: none;
		display: flex;
		align-items: center;
		gap: 4px;
		padding: 2px 2px 0 0;
		background: #eef2f6;
		border-top: 1px solid #fff;
	}
	.cells {
		display: flex;
		align-items: center;
		width: 456px;
		margin-right: auto;
	}
	.cell {
		display: flex;
		align-items: center;
		justify-content: center;
		width: 24px;
		height: 16px;
		flex: none;
		border-right: 1px solid #c6ccd2;
	}
	.zone {
		width: 168px;
		gap: 4px;
		justify-content: flex-start;
		padding-right: 6px;
	}
	.guard {
		width: 43px;
		gap: 8px;
	}
	.zoom {
		width: 81px;
		gap: 6px;
	}
	.zoom .down {
		margin-right: 7px;
	}
	.grip {
		width: 12px;
		height: 12px;
		background: radial-gradient(circle, #c0c5cb 1px, transparent 1px) 0 0 / 4px 4px;
	}
	.taskbar {
		height: 30px;
		flex: none;
		display: flex;
		align-items: center;
		background: linear-gradient(#1f4aa0 1px, #7cbcf0 2px, #5da1e8 15px, #376fc9 16px, #234fae);
	}
	.start {
		width: 84px;
		height: 30px;
		gap: 6px;
		border: 0;
		border-radius: 12px 0 0 12px;
		color: #fff;
		font-size: 16px;
		font-style: italic;
		background: linear-gradient(#2c7a36, #6dc76f 4px, #3fa045 14px, #279231 18px, #33b03b);
	}
	.start .icon {
		width: 18px;
		height: 18px;
	}
	.task {
		width: 158px;
		height: 24px;
		margin-right: 9px;
		gap: 4px;
		justify-content: flex-start;
		padding: 0 8px;
		overflow: hidden;
		border: 1px solid #73aef0;
		border-radius: 3px;
		color: #fff;
		background: linear-gradient(#6aa9ec, #4382d6);
	}
	.task.pressed {
		margin-right: 2px;
		border-color: #16387e;
		background: linear-gradient(#1f4a95, #173c84);
	}
	.lang {
		margin-right: auto;
		margin-left: 14px;
		padding: 0 2px;
		color: #fff;
		background: #3467ba;
	}
	.tray {
		display: flex;
		align-items: center;
		gap: 2px;
		height: 28px;
		padding-left: 16px;
		background: linear-gradient(90deg, #e3edf9, #b4d0f2 50%, #8db3e6);
	}
	.tray time {
		margin-right: 8px;
	}
</style>
